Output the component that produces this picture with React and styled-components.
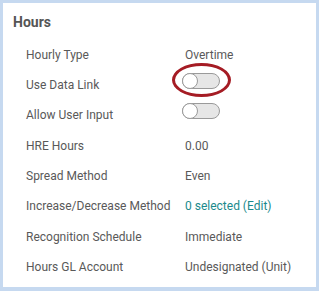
import React from 'react'
import styled, { createGlobalStyle } from 'styled-components'

const GlobalStyle = createGlobalStyle`
  html, body {
    margin: 0;
    padding: 0;
    background: #c6d9f0;
  }
`

const Frame = styled.div`
  box-sizing: border-box;
  width: 319px;
  height: 291px;
  border: 3px solid #c6d9f0;
  border-bottom-width: 4px;
  background: #fff;
  font-family: Roboto, "Liberation Sans", sans-serif;
  color: #595959;
`

const Title = styled.h2`
  margin: 0;
  padding: 11px 0 0 10px;
  font-size: 14px;
  font-weight: 700;
  line-height: 16px;
  color: #555;
`

const Fields = styled.div`
  display: grid;
  grid-template-columns: 159px 1fr;
  grid-auto-rows: 30.3px;
  padding: 0 0 0 23px;
  margin-top: 9.6px;
`

const Label = styled.div`
  display: flex;
  align-items: center;
  font-size: 12px;
`

const Value = styled.div`
  display: flex;
  align-items: center;
  font-size: 12px;
  color: ${({ $link }) => ($link ? '#1b8a8c' : '#595959')};
  position: relative;
`

const Toggle = styled.span`
  position: relative;
  align-self: flex-start;
  box-sizing: border-box;
  width: 38px;
  height: 16px;
  margin: 3px 0 0 -3px;
  border: 1px solid #9a9a9a;
  border-radius: 8px;
  background: #e6e6e6;

  &::before {
    content: '';
    position: absolute;
    left: -1px;
    top: -1px;
    box-sizing: border-box;
    width: 16px;
    height: 16px;
    border: 1px solid #9a9a9a;
    border-radius: 50%;
    background: #fff;
  }
`

const Highlight = styled.span`
  position: absolute;
  left: -13px;
  top: -7px;
  box-sizing: border-box;
  width: 59px;
  height: 34px;
  border: 3px solid #a51c24;
  border-radius: 50%;
  pointer-events: none;
`

const rows = [
  ['Hourly Type', 'Overtime'],
  ['Use Data Link', 'toggle-hl'],
  ['Allow User Input', 'toggle'],
  ['HRE Hours', '0.00'],
  ['Spread Method', 'Even'],
  ['Increase/Decrease Method', 'link'],
  ['Recognition Schedule', 'Immediate'],
  ['Hours GL Account', 'Undesignated (Unit)'],
]

const renderValue = (v) => {
  if (v === 'toggle') return <Toggle />
  if (v === 'toggle-hl') return (<><Highlight /><Toggle /></>)
  if (v === 'link') return '0 selected (Edit)'
  return v
}

const App = () => {
  return (
    <>
      <GlobalStyle />
      <Frame>
        <Title>Hours</Title>
        <Fields>
          {rows.map(([label, value]) => (
            <React.Fragment key={label}>
              <Label>{label}</Label>
              <Value $link={value === 'link'}>{renderValue(value)}</Value>
            </React.Fragment>
          ))}
        </Fields>
      </Frame>
    </>
  )
}

export default App
